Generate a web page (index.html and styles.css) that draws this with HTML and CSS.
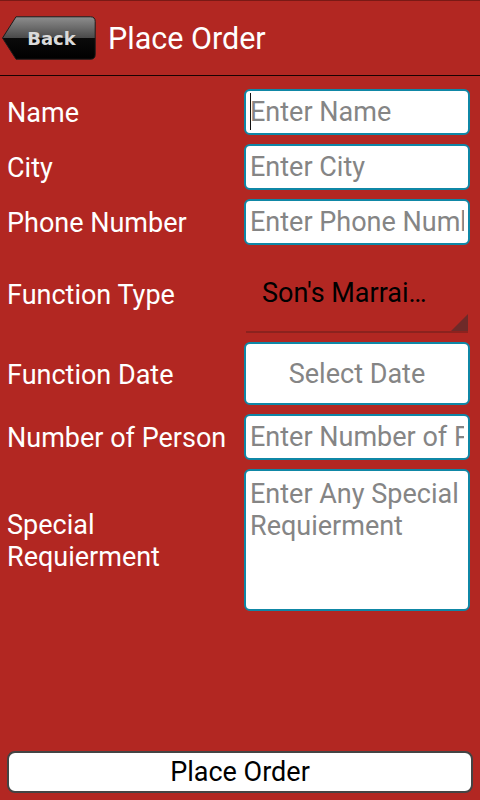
FILE: index.html
```html
<!DOCTYPE html>
<html lang="en">
<head>
    <meta charset="UTF-8">
    <meta name="viewport" content="width=device-width, initial-scale=1.0">
    <title>Place Order</title>
    <link rel="stylesheet" href="styles.css">
</head>
<body>

    <!-- Top bar -->
    <header class="top-bar">
        <a href="#" class="back-btn" aria-label="Back">
            <svg width="94" height="44" viewBox="0 0 94 44">
                <defs>
                    <linearGradient id="backFill" x1="0" y1="0" x2="0" y2="1">
                        <stop offset="0" stop-color="#8e8e8e"/>
                        <stop offset="0.5" stop-color="#4a4a4a"/>
                        <stop offset="0.5" stop-color="#0b0b0b"/>
                        <stop offset="1" stop-color="#000"/>
                    </linearGradient>
                </defs>
                <path d="M0.5 22 L14 0.8 H88.5 Q93.2 0.8 93.2 5.5 V38.5 Q93.2 43.2 88.5 43.2 H14 Z" fill="url(#backFill)" stroke="#1c1c1c" stroke-width="1"/>
                <text x="49.5" y="28.5" text-anchor="middle" class="back-text">Back</text>
            </svg>
        </a>
        <h1 class="title">Place Order</h1>
    </header>

    <!-- Order form -->
    <main class="order-form">
        <label class="field-label" for="name">Name</label>
        <div class="caret-wrap">
            <input class="box" type="text" id="name" placeholder="Enter Name">
            <span class="caret"></span>
        </div>

        <label class="field-label" for="city">City</label>
        <input class="box" type="text" id="city" placeholder="Enter City">

        <label class="field-label" for="phone">Phone Number</label>
        <input class="box" type="text" id="phone" placeholder="Enter Phone Number">

        <span class="field-label">Function Type</span>
        <div class="spinner">Son's Marrai…</div>

        <span class="field-label">Function Date</span>
        <div class="box date-box">Select Date</div>

        <label class="field-label" for="persons">Number of Person</label>
        <input class="box" type="text" id="persons" placeholder="Enter Number of Person">

        <label class="field-label" for="special">Special<br>Requierment</label>
        <textarea class="box special-box" id="special" placeholder="Enter Any Special Requierment"></textarea>
    </main>

    <footer class="bottom">
        <button class="order-btn" type="button">Place Order</button>
    </footer>

</body>
</html>
```

FILE: styles.css
```css
/* General */
body {
    margin: 0;
    height: 800px;
    background-color: #b22722;
    color: #fff;
    font-family: Roboto, "Noto Sans", sans-serif;
    display: flex;
    flex-direction: column;
    overflow: hidden;
}

/* Top bar */
.top-bar {
    height: 74px;
    border-top: 1px solid #7a1915;
    border-bottom: 1px solid #1a0302;
    display: flex;
    align-items: center;
    gap: 12px;
    padding-left: 2px;
}

.back-btn {
    display: flex;
    margin-top: -1px;
}

.back-text {
    font-family: "DejaVu Sans", sans-serif;
    font-weight: bold;
    font-size: 18px;
    fill: #dadada;
}

.title {
    margin: 0;
    font-size: 30.5px;
    font-weight: normal;
}

/* Form grid */
.order-form {
    flex: 1;
    display: grid;
    grid-template-columns: 237px 226px;
    grid-auto-rows: min-content;
    row-gap: 9px;
    padding: 13px 10px 0 7px;
    align-items: center;
}

.field-label {
    font-size: 27px;
    line-height: 32px;
    padding-top: 2px;
}

.box {
    box-sizing: border-box;
    width: 100%;
    height: 46px;
    margin: 0;
    padding: 0 4px;
    border: 2px solid #0f87a6;
    border-radius: 6px;
    background-color: #fff;
    font-family: Roboto, "Noto Sans", sans-serif;
    font-size: 27px;
    color: #222;
    outline: none;
}

.box::placeholder {
    color: #858585;
}

.caret-wrap {
    position: relative;
}

.caret-wrap .box {
    caret-color: transparent;
}

.caret {
    position: absolute;
    left: 6px;
    top: 4px;
    width: 1px;
    height: 37px;
    background-color: #111;
}

/* Spinner */
.spinner {
    position: relative;
    height: 79px;
    margin: 0 2px;
    box-sizing: border-box;
    border-bottom: 2px solid #8c221e;
    padding-left: 16px;
    display: flex;
    align-items: center;
    font-size: 27px;
    color: #000;
}

.spinner::after {
    content: "";
    position: absolute;
    right: 0;
    bottom: 0;
    width: 17px;
    height: 17px;
    background-color: #6e2a29;
    clip-path: polygon(100% 0, 100% 100%, 0 100%);
}

.date-box {
    height: 63px;
    display: flex;
    align-items: center;
    justify-content: center;
    color: #858585;
}

.special-box {
    height: 142px;
    padding-top: 7px;
    line-height: 32px;
    resize: none;
    overflow: hidden;
}

/* Bottom button */
.bottom {
    padding: 0 7px 7px;
}

.order-btn {
    width: 100%;
    height: 42px;
    border: 2px solid #444;
    border-radius: 8px;
    background-color: #fff;
    color: #000;
    font-family: Roboto, "Noto Sans", sans-serif;
    font-size: 27px;
    padding: 0;
}
```
